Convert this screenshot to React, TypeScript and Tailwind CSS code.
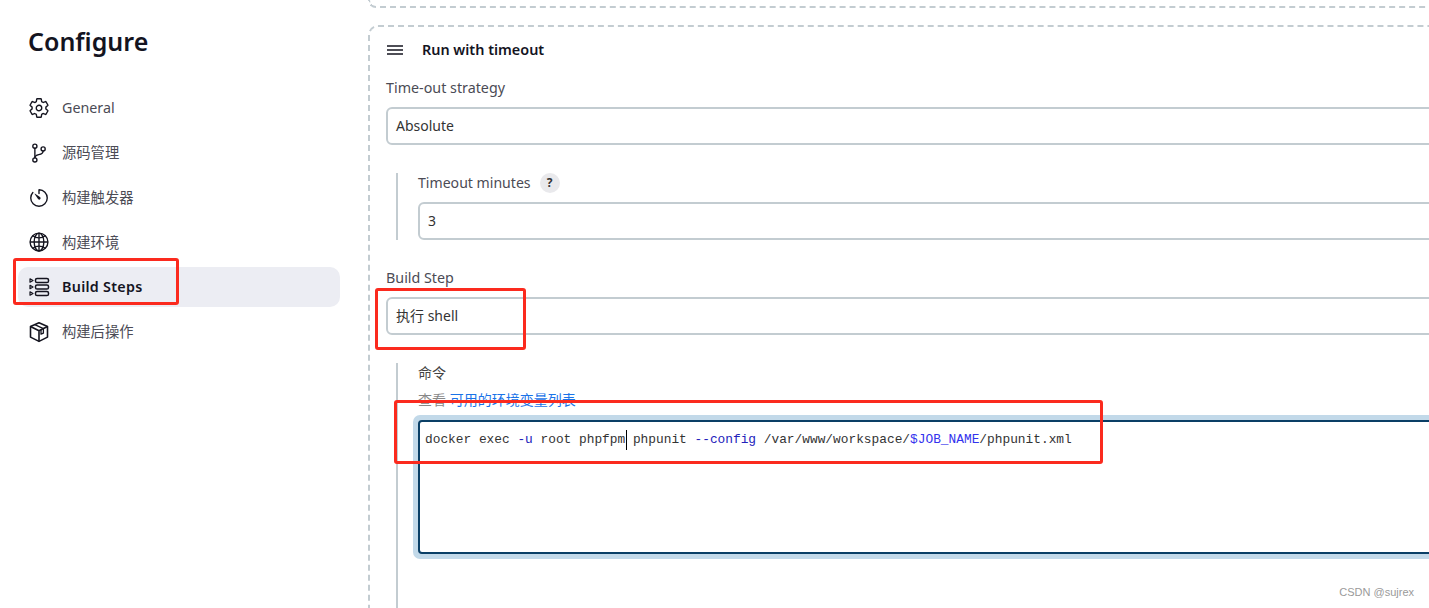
import { IoSettingsOutline, IoGitBranchOutline, IoTimerOutline, IoGlobeOutline } from 'react-icons/io5';

const sansFont = "font-['Noto_Sans','Noto_Sans_CJK_SC',sans-serif]";

function StepsIcon() {
  return (
    <svg viewBox="0 0 22 22" className="h-[22px] w-[22px]" fill="none" stroke="currentColor" strokeWidth="1.5">
      <rect x="7.5" y="2.5" width="13" height="4" rx="1.6" />
      <rect x="7.5" y="9" width="13" height="4" rx="1.6" />
      <rect x="7.5" y="15.5" width="13" height="4" rx="1.6" />
      <path d="M2 2.8l3 1.7-3 1.7zM2 9.3l3 1.7-3 1.7zM2 15.8l3 1.7-3 1.7z" strokeWidth="1.2" strokeLinejoin="round" />
    </svg>
  );
}

function BoxIcon() {
  return (
    <svg viewBox="0 0 22 22" className="h-[22px] w-[22px]" fill="none" stroke="currentColor" strokeWidth="1.6" strokeLinejoin="round">
      <path d="M11 1.8l8.5 3.7v10.6L11 20.4l-8.5-4.3V5.5z" />
      <path d="M2.5 5.5L11 9.8l8.5-4.3M11 9.8v10.6" />
      <path d="M6.8 3.6l8.6 4v4.6l-2.4 1v-4.4" strokeWidth="1.3" />
    </svg>
  );
}

const navItems = [
  { label: 'General', icon: <IoSettingsOutline className="h-[22px] w-[22px]" /> },
  { label: '源码管理', icon: <IoGitBranchOutline className="h-[22px] w-[22px]" /> },
  { label: '构建触发器', icon: <IoTimerOutline className="h-[22px] w-[22px]" /> },
  { label: '构建环境', icon: <IoGlobeOutline className="h-[22px] w-[22px]" /> },
  { label: 'Build Steps', icon: <StepsIcon />, active: true },
  { label: '构建后操作', icon: <BoxIcon /> },
];

function Sidebar() {
  return (
    <aside className="w-[368px] shrink-0 pl-[18px] pr-[28px]">
      <h1 className="mt-[22px] pl-[10px] text-[25px] leading-[38px] font-semibold text-[#14141f]">Configure</h1>
      <nav className="mt-[28px] flex flex-col gap-[4.8px]">
        {navItems.map((item) => (
          <div
            key={item.label}
            className={`flex h-10 items-center gap-[12px] rounded-[10px] pl-[10px] text-[14.3px] ${
              item.active ? 'bg-[#ecedf3] font-semibold tracking-[0.3px] text-[#14141f]' : 'text-[#4b4b55]'
            }`}
          >
            <span className="text-[#14141f]">{item.icon}</span>
            <span>{item.label}</span>
          </div>
        ))}
      </nav>
    </aside>
  );
}

function SelectBox({ children }: { children: React.ReactNode }) {
  return (
    <div className="flex h-[38px] items-center rounded-[6px] border-2 border-[#c3ccd1] pl-2 text-[14px] text-[#333]">
      <span className="-mt-[2px]">{children}</span>
    </div>
  );
}

function Command() {
  return (
    <div className="mt-[5px] h-[144px] rounded-[7px] bg-[#c2d9e9] p-[5px]">
      <div className="relative h-full rounded-[4px] border-2 border-[#0a3f66] bg-white pl-[5px] pt-[9px] font-['Liberation_Mono',monospace] text-[12.83px] leading-[18px] whitespace-pre text-[#333]">
        docker exec <span className="text-[#2222bb]">-u</span> root phpfpm
        <span className="absolute left-[206px] top-[8px] h-5 w-px bg-black" /> phpunit{' '}
        <span className="text-[#2222bb]">--config</span> /var/www/workspace/
        <span className="text-[#3333ee]">$JOB_NAME</span>/phpunit.xml
      </div>
    </div>
  );
}

function Form() {
  return (
    <main className="min-w-0 flex-1 overflow-hidden">
      <div className="h-2 w-[1200px] rounded-bl-[8px] border-b-2 border-l-2 border-dashed border-[#c3ccd1]" />
      <section className="mt-[17px] w-[1200px] rounded-tl-[10px] border-t-2 border-l-2 border-dashed border-[#c3ccd1] pl-4 pb-10">
        <div className="flex h-[46px] items-center gap-[19px] pl-[1px] text-[14.4px] font-semibold text-[#14141f]">
          <svg viewBox="0 0 16 10" className="h-[10px] w-4" stroke="currentColor" strokeWidth="1.4">
            <path d="M0 1h16M0 5h16M0 9h16" />
          </svg>
          <span>Run with timeout</span>
        </div>
        <div className="h-[34px] pt-[5px] text-[14.3px] leading-5 text-[#4b4b55]">Time-out strategy</div>
        <SelectBox>Absolute</SelectBox>

        <div className="mt-7 ml-[10px] h-[67px] border-l-2 border-[#c3ccd1] pl-5">
          <div className="flex h-[29px] items-start gap-[9px] text-[14.1px] leading-5 text-[#4b4b55]">
            Timeout minutes
            <span className="flex h-5 w-5 items-center justify-center rounded-full bg-[#e9e9ec] text-[12px] font-bold text-[#333]">?</span>
          </div>
          <SelectBox>3</SelectBox>
        </div>

        <div className="mt-[28px] h-[29px] text-[14.3px] leading-5 text-[#4b4b55]">Build Step</div>
        <SelectBox>执行 shell</SelectBox>

        <div className="mt-7 ml-[10px] h-[260px] border-l-2 border-[#c3ccd1] pl-5">
          <div className="text-[14px] leading-5 text-[#444]">命令</div>
          <div className="mt-[7px] text-[14px] leading-5 text-[#888]">
            查看 <span className="text-[#1a73e8]">可用的环境变量列表</span>
          </div>
          <div className="-ml-[5px]">
            <Command />
          </div>
        </div>
      </section>
    </main>
  );
}

export default function App() {
  return (
    <div className={`relative flex h-[608px] w-[1429px] overflow-hidden bg-white ${sansFont}`}>
      <Sidebar />
      <Form />
      {/* annotations drawn over the screenshot */}
      <div className="absolute left-[13px] top-[258px] h-[47px] w-[166px] rounded-[3px] border-[3px] border-[#fb2a1e]" />
      <div className="absolute left-[375px] top-[288px] h-[62px] w-[151px] rounded-[3px] border-[3px] border-[#fb2a1e]" />
      <div className="absolute left-[394px] top-[400px] h-[64px] w-[709px] rounded-[3px] border-[3px] border-[#fb2a1e]" />
      <div className="absolute right-[15px] top-[585px] font-['Liberation_Sans',sans-serif] text-[11px] leading-[14px] text-[#9a9a9a]">CSDN @sujrex</div>
    </div>
  );
}
